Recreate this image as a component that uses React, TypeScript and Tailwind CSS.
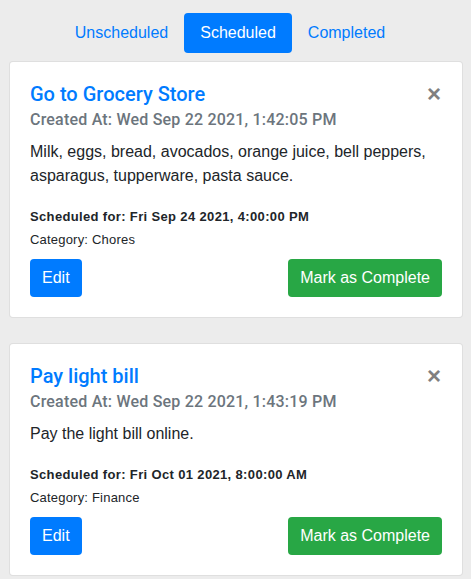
import React from "react";

type Task = {
  title: string;
  created: string;
  desc: string;
  scheduled: string;
  category: string;
};

const tasks: Task[] = [
  {
    title: "Go to Grocery Store",
    created: "Created At: Wed Sep 22 2021, 1:42:05 PM",
    desc: "Milk, eggs, bread, avocados, orange juice, bell peppers, asparagus, tupperware, pasta sauce.",
    scheduled: "Scheduled for: Fri Sep 24 2021, 4:00:00 PM",
    category: "Category: Chores",
  },
  {
    title: "Pay light bill",
    created: "Created At: Wed Sep 22 2021, 1:43:19 PM",
    desc: "Pay the light bill online.",
    scheduled: "Scheduled for: Fri Oct 01 2021, 8:00:00 AM",
    category: "Category: Finance",
  },
];

const medium = { fontFamily: "Roboto, 'Liberation Sans', sans-serif" };

function Card({ t }: { t: Task }) {
  return (
    <div className="w-[454px] rounded-[4px] border border-[rgba(0,0,0,0.125)] bg-white p-5">
      <div className="flex items-start justify-between">
        <div className="text-[20px] font-medium leading-[24px] text-[#007bff]" style={medium}>
          {t.title}
        </div>
        <button className="mr-[1px] mt-[2px] text-[24px] font-bold leading-[20px] text-[#808080]">×</button>
      </div>
      <div className="mt-[4px] text-[16px] font-medium leading-[20px] tracking-[0.2px] text-[#6c757d]" style={medium}>
        {t.created}
      </div>
      <p className="mt-[10px] text-[16px] leading-[24px] text-[#212529]">{t.desc}</p>
      <div className="mt-[19px] text-[13px] font-bold leading-[20px] tracking-[0.35px] text-[#212529]">{t.scheduled}</div>
      <div className="mt-[3px] text-[13px] leading-[20px] tracking-[0.2px] text-[#212529]">{t.category}</div>
      <div className="mt-[9px] flex justify-between">
        <button className="h-[38px] rounded-[4px] bg-[#007bff] px-3 text-[16px] leading-[24px] text-white">Edit</button>
        <button className="h-[38px] rounded-[4px] bg-[#28a745] px-3 text-[16px] leading-[24px] text-white">Mark as Complete</button>
      </div>
    </div>
  );
}

export default function App() {
  return (
    <div
      className="min-h-[579px] bg-[#ececec] pt-[13px]"
      style={{ fontFamily: "'Liberation Sans', Arial, sans-serif" }}
    >
      <div className="flex justify-center pr-[11px]">
        <button className="h-[40px] rounded-[4px] px-4 text-[16px] leading-[24px] text-[#007bff]">Unscheduled</button>
        <button className="h-[40px] rounded-[4px] bg-[#007bff] px-4 text-[16px] leading-[24px] text-white">Scheduled</button>
        <button className="h-[40px] rounded-[4px] px-4 text-[16px] leading-[24px] text-[#007bff]">Completed</button>
      </div>
      <div className="ml-[9px] mt-[8px] flex flex-col gap-[25px]">
        {tasks.map((t) => (
          <Card key={t.title} t={t} />
        ))}
      </div>
    </div>
  );
}
